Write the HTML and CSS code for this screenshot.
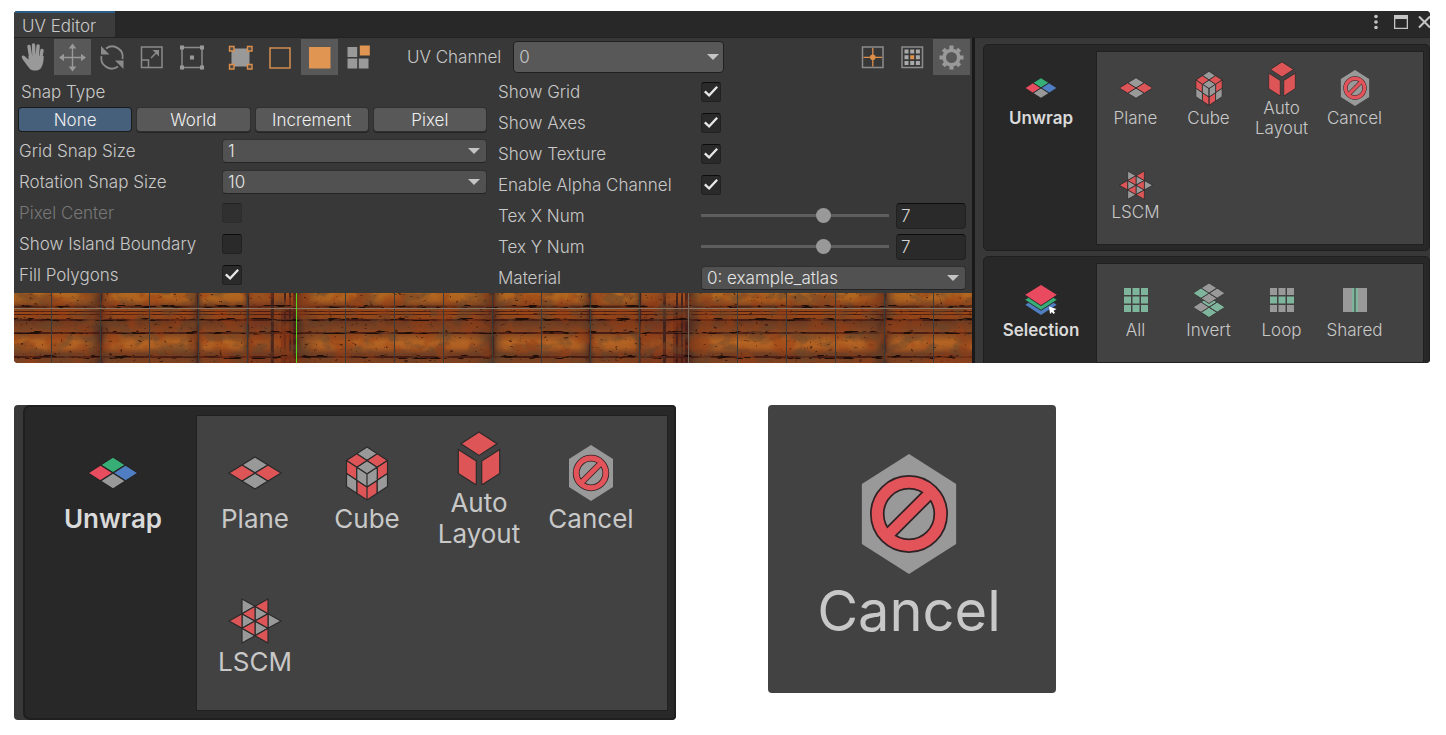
FILE: index.html
```html
<!DOCTYPE html>
<html lang="en">
<head>
<meta charset="utf-8">
<title>UV Editor</title>
<link rel="stylesheet" href="styles.css">
</head>
<body>
<svg class="sprite" aria-hidden="true">
  <symbol id="i-unwrap" viewBox="0 0 56 56">
    <g stroke="#262626" stroke-width="1.4">
      <path fill="#36ae75" d="M28 12l12.5 8L28 28l-12.5-8z"/>
      <path fill="#e84c5f" d="M15.500 20L28 28l-12.500 8L3 28z"/>
      <path fill="#4f7ec2" d="M40.500 20L53 28l-12.500 8L28 28z"/>
      <path fill="#999" d="M28 28l12.500 8L28 44l-12.500-8z"/>
    </g>
  </symbol>
  <symbol id="i-plane" viewBox="0 0 56 56">
    <g stroke="#2b2b2b" stroke-width="1.3">
      <path fill="#999" d="M28 12l13 8-13 8-13-8zM28 28l13 8-13 8-13-8z"/>
      <path fill="#de5557" d="M15 20l13 8-13 8-13-8zM41 20l13 8-13 8-13-8z"/>
    </g>
  </symbol>
  <symbol id="i-cube" viewBox="0 0 56 56">
    <g stroke="#2b2b2b" stroke-width="1.2" stroke-linejoin="round">
      <path fill="#999" d="M28 2l10.250 6.750L28 15.500 17.750 8.750zM28 15.500l10.250 6.750L28 29l-10.250-6.750z"/>
      <path fill="#de5557" d="M17.750 8.750L28 15.500l-10.250 6.750L7.500 15.500zM38.250 8.750l10.250 6.750-10.250 6.750L28 15.500z"/>
      <path fill="#de5557" d="M7.500 15.500l10.250 6.750v13L7.500 28.500zM17.750 35.250L28 42v13l-10.250-6.750zM48.500 15.500l-10.250 6.750v13l10.250-6.750zM38.250 35.250L28 42v13l10.250-6.750z"/>
      <path fill="#999" d="M17.750 22.250L28 29v13l-10.250-6.750zM7.500 28.500l10.250 6.750v13L7.500 41.500zM38.250 22.250L28 29v13l10.250-6.750zM48.500 28.500l-10.250 6.750v13l10.250-6.750z"/>
    </g>
  </symbol>
  <symbol id="i-auto" viewBox="0 0 56 56">
    <path fill="#de5557" stroke="#2b2b2b" stroke-width="1.200" d="M28 3l18 11.700L28 26.400 10 14.700zM7.300 20.500l18 11.500v24l-18-11.500zM48.700 20.500l-18 11.500v24l18-11.500z"/>
  </symbol>
  <symbol id="i-cancel" viewBox="0 0 56 56">
    <path fill="#999" d="M28 0l22 14v28L28 56 6 42V14z"/>
    <g fill="none" stroke="#2f2124">
      <circle cx="28" cy="28" r="14.800" stroke-width="6.800"/>
      <path stroke-width="6.400" d="M18 38l20-20"/>
    </g>
    <g fill="none" stroke="#e3535a">
      <circle cx="28" cy="28" r="14.800" stroke-width="5.200"/>
      <path stroke-width="4.800" d="M18 38l20-20"/>
    </g>
  </symbol>
  <symbol id="i-lscm" viewBox="0 0 56 56">
    <g stroke="#2b2b2b" stroke-width="1.200">
      <path fill="#999" d="M15 11v14.700l13-7.400zM15 25.700v14.600L28 33zM15 40.300V55l13-7.300zM28 18.300V33l13-7.300zM28 33v14.700l13-7.400zM41 25.700v14.600L54 33z"/>
      <path fill="#de5557" d="M28 18.300V33l-13-7.300zM28 33v14.700l-13-7.400zM15 25.700v14.600L2 33zM41 11v14.700l-13-7.400zM41 25.700v14.600L28 33zM41 40.300V55l-13-7.300z"/>
    </g>
  </symbol>
  <symbol id="i-selection" viewBox="0 0 36 36">
    <path fill="#4f7ec2" d="M18 13l15.700 9.800L18 33 2.300 22.800z"/>
    <path fill="#38ae76" stroke="#262626" stroke-width=".9" d="M18 8l16.500 9.800L18 28.300 1.500 17.800z"/>
    <path fill="#e94a60" stroke="#262626" stroke-width=".9" d="M18 2.500l16.500 10.300L18 23.600 1.500 12.800z"/>
    <path fill="#fff" d="M26 24.500l7.500 2.500-3 1.700 1.500 2-1.600 1.200-1.500-2-1.900 2z"/>
  </symbol>
  <symbol id="i-all" viewBox="0 0 36 36">
    <path fill="#7fb59c" d="M6 6h7v7H6zm8.500 0h7v7h-7zM23 6h7v7h-7zM6 14.500h7v7H6zm8.500 0h7v7h-7zm8.500 0h7v7h-7zM6 23h7v7H6zm8.500 0h7v7h-7zm8.500 0h7v7h-7z"/>
  </symbol>
  <symbol id="i-loop" viewBox="0 0 36 36">
    <path fill="#999" d="M6 6h7v7H6zm8.500 0h7v7h-7zM23 6h7v7h-7zM6 23h7v7H6zm8.500 0h7v7h-7zm8.500 0h7v7h-7z"/>
    <path fill="#7fb59c" d="M6 14.500h7v7H6zm8.500 0h7v7h-7zm8.500 0h7v7h-7z"/>
  </symbol>
  <symbol id="i-invert" viewBox="0 0 36 36">
    <g stroke="#3a3a3a" stroke-width=".9">
      <path fill="#7fb59c" d="M18 15l8 5.100-8 5.200-8-5.200zM26 20l8 5.200-8 5.100-8-5.100zM18 25.200l8 5.100-8 5.200-8-5.200z"/>
      <path fill="#999" d="M10 20l8 5.200-8 5.100-8-5.100z"/>
      <path fill="#999" d="M18 1l8 5.100-8 5.200-8-5.200zM26 6l8 5.200-8 5.100-8-5.100zM18 11.200l8 5.100-8 5.200-8-5.200z"/>
      <path fill="#7fb59c" d="M10 6l8 5.200-8 5.100-8-5.100z"/>
    </g>
  </symbol>
  <symbol id="i-shared" viewBox="0 0 36 36">
    <path fill="#999" d="M6 6h9v24H6zM21 6h9v24h-9z"/>
    <path fill="#7fb59c" d="M15 6h6v24h-6z"/>
    <path fill="#2c3a34" d="M17.500 6h1v24h-1z"/>
  </symbol>
</svg>

<main class="page">
  <section class="window">
    <header class="titlebar">
      <h1 class="tab">UV Editor</h1>
      <div class="win-actions">
        <button class="win-btn" aria-label="Menu"><svg viewBox="0 0 16 16" width="16" height="16"><g fill="#c4c4c4"><circle cx="8" cy="2.500" r="1.800"/><circle cx="8" cy="8" r="1.800"/><circle cx="8" cy="13.500" r="1.800"/></g></svg></button>
        <button class="win-btn" aria-label="Maximize"><svg viewBox="0 0 16 16" width="16" height="16"><path fill="#c4c4c4" fill-rule="evenodd" d="M2 1h14v14H2zM3.300 5v8.700h11.400V5z"/></svg></button>
        <button class="win-btn" aria-label="Close"><svg viewBox="0 0 16 16" width="16" height="16"><path stroke="#c4c4c4" stroke-width="2" d="M3 2.500l11 11M14 2.500l-11 11"/></svg></button>
      </div>
    </header>
    <div class="workspace">
      <div class="editor">
        <div class="toolbar">
          <div class="tool-group">
            <button class="icon-btn" aria-label="Pan"><svg viewBox="0 0 36 36"><g stroke="#999" stroke-linecap="round" fill="none" stroke-width="3.400"><path d="M16.800 19L15 7.500M20 18l-.5-12M23.200 18l.9-11M26.500 20l1.500-8.500"/></g><path fill="#999" d="M9.500 16.500c2 .5 3 3 5 4V17h15.200c0 5-.5 9-3 12.500-1.500 2.500-9 3-11.200 0-2.500-3.500-5.500-7-7.500-10.500-.8-1.700.2-2.900 1.500-2.500z"/></svg></button>
            <button class="icon-btn on" aria-label="Move"><svg viewBox="0 0 36 36"><path stroke="#999" stroke-width="1.400" d="M18.500 7v23M7 18.500h23"/><path fill="#999" d="M18.500 4.500l3.800 5h-7.600zM18.500 32.500l3.800-5h-7.600zM5 18.500l5-3.800v7.600zM32 18.500l-5-3.800v7.600z"/></svg></button>
            <button class="icon-btn" aria-label="Rotate"><svg viewBox="0 0 36 36"><path fill="none" stroke="#8a8a8a" stroke-width="1.800" d="M12 9.500A10.500 10.500 0 0 1 28.500 20M24 27.500A10.500 10.500 0 0 1 7.500 17"/><path fill="#8a8a8a" d="M7 7v8.500h8.500zM29.500 30v-8.500H21z"/></svg></button>
            <button class="icon-btn" aria-label="Scale"><svg viewBox="0 0 36 36"><path fill="none" stroke="#8a8a8a" stroke-width="1.500" d="M7.500 8h20.500v20.500H7.500zM7.500 21h7v7.500M17 19l6-6"/><path fill="#8a8a8a" d="M25 11v6.500L18.500 11z"/></svg></button>
            <button class="icon-btn" aria-label="Rect"><svg viewBox="0 0 36 36"><path fill="none" stroke="#8a8a8a" stroke-width="1.500" d="M8 8.500h20v20H8z"/><path fill="#999" d="M6 6.500h4v4H6zM26 6.500h4v4h-4zM6 26.500h4v4H6zM26 26.500h4v4h-4zM16 16.500h4v4h-4z"/></svg></button>
          </div>
          <div class="tool-group">
            <button class="icon-btn" aria-label="Vertex mode"><svg viewBox="0 0 36 36"><path fill="#999" d="M10.500 9.500h18v18h-18z"/><path fill="#4a4a4a" stroke="#dd8f4a" stroke-width="1.400" d="M8.500 7.500H13V12H8.500zM26.500 7.500H31V12h-4.500zM8.500 25.500H13V30H8.500zM26.500 25.500H31V30h-4.500z"/></svg></button>
            <button class="icon-btn" aria-label="Edge mode"><svg viewBox="0 0 36 36"><path fill="none" stroke="#cf8a4c" stroke-width="1.600" d="M9 9h20v20H9z"/></svg></button>
            <button class="icon-btn on" aria-label="Face mode"><svg viewBox="0 0 36 36"><path fill="#e09652" d="M8 8h21.500v21.500H8z"/></svg></button>
            <button class="icon-btn" aria-label="Island mode"><svg viewBox="0 0 36 36"><path fill="#999" d="M6.500 8h9.700v10H6.500zM6.500 19.500h9.700v10H6.500zM17.800 19.500h9.700v10h-9.700z"/><path fill="#e09652" d="M18.800 6.500h10v10h-10z"/></svg></button>
          </div>
          <label class="toolbar-label" for="uv-channel">UV Channel</label>
          <span class="select-wrap channel"><select id="uv-channel"><option>0</option></select></span>
          <div class="tool-group view-group">
            <button class="icon-btn" aria-label="Pivot"><svg viewBox="0 0 36 36"><path fill="none" stroke="#8c8c8c" stroke-width="1.500" d="M7.500 8h20.500v20.500H7.500z"/><path stroke="#dd8f4a" stroke-width="1.300" d="M17.800 9v18.500M8.500 18.300H27"/><circle cx="17.800" cy="18.300" r="2.800" fill="#dd8f4a"/></svg></button>
            <button class="icon-btn" aria-label="Grid"><svg viewBox="0 0 36 36"><path fill="none" stroke="#8c8c8c" stroke-width="1.500" d="M8 8h20.500v20.500H8z"/><path fill="#aaa" d="M10.500 10.500h4v4h-4zm5.700 0h4v4h-4zm5.700 0h4v4h-4zM10.500 16.200h4v4h-4zm11.400 0h4v4h-4zM10.500 21.900h4v4h-4zm5.700 0h4v4h-4zm5.700 0h4v4h-4z"/><path fill="#e0924c" d="M16.200 16.200h4v4h-4z"/></svg></button>
            <button class="icon-btn on" aria-label="Settings"><svg viewBox="0 0 36 36"><circle cx="18.500" cy="18.500" r="7.300" fill="none" stroke="#999" stroke-width="3.600"/><g stroke="#999" stroke-width="4.200"><path d="M18.500 6.500v4M18.500 26.500v4M6.500 18.500h4M26.500 18.500h4M10.300 10.300l2.500 2.500M24.200 24.200l2.500 2.500M10.300 26.700l2.500-2.500M24.200 12.800l2.500-2.500"/></g></svg></button>
          </div>
        </div>

        <div class="settings">
          <div class="col">
            <div class="row"><span class="snap-title" id="snap">Snap Type</span></div>
            <div class="segments" role="group" aria-labelledby="snap">
              <button class="seg active">None</button><button class="seg">World</button><button class="seg">Increment</button><button class="seg">Pixel</button>
            </div>
            <div class="row"><label for="grid-snap">Grid Snap Size</label><span class="select-wrap"><select id="grid-snap"><option>1</option></select></span></div>
            <div class="row"><label for="rot-snap">Rotation Snap Size</label><span class="select-wrap"><select id="rot-snap"><option>10</option></select></span></div>
            <div class="row disabled"><label for="pixel-center">Pixel Center</label><input type="checkbox" id="pixel-center" disabled></div>
            <div class="row"><label for="island">Show Island Boundary</label><input type="checkbox" id="island"></div>
            <div class="row"><label for="fill">Fill Polygons</label><input type="checkbox" id="fill" checked></div>
          </div>
          <div class="col">
            <div class="row"><label for="grid">Show Grid</label><input type="checkbox" id="grid" checked></div>
            <div class="row"><label for="axes">Show Axes</label><input type="checkbox" id="axes" checked></div>
            <div class="row"><label for="texture">Show Texture</label><input type="checkbox" id="texture" checked></div>
            <div class="row"><label for="alpha">Enable Alpha Channel</label><input type="checkbox" id="alpha" checked></div>
            <div class="row"><label for="tex-x">Tex X Num</label><div class="slider"><input type="range" id="tex-x" min="1" max="10" value="7"><input type="text" class="num" value="7" aria-label="Tex X Num value"></div></div>
            <div class="row"><label for="tex-y">Tex Y Num</label><div class="slider"><input type="range" id="tex-y" min="1" max="10" value="7"><input type="text" class="num" value="7" aria-label="Tex Y Num value"></div></div>
            <div class="row"><label for="material">Material</label><span class="select-wrap"><select id="material"><option>0: example_atlas</option></select></span></div>
          </div>
        </div>

        <svg class="canvas" viewBox="0 0 958 70" preserveAspectRatio="xMinYMin slice" role="img" aria-label="Texture preview">
          <defs>
            <linearGradient id="bands" x1="0" y1="0" x2="0" y2="1">
              <stop offset="0" stop-color="#b3681f"/><stop offset=".1" stop-color="#ab6020"/><stop offset=".17" stop-color="#854620"/>
              <stop offset=".2" stop-color="#40180e"/><stop offset=".22" stop-color="#8a421a"/><stop offset=".26" stop-color="#9c4a19"/>
              <stop offset=".36" stop-color="#904619"/><stop offset=".4" stop-color="#683820"/><stop offset=".54" stop-color="#844522"/>
              <stop offset=".6" stop-color="#8c4c20"/><stop offset=".7" stop-color="#b46423"/><stop offset=".78" stop-color="#ac5d22"/>
              <stop offset=".87" stop-color="#703d23"/><stop offset=".92" stop-color="#743f21"/><stop offset="1" stop-color="#7f421f"/>
            </linearGradient>
            <linearGradient id="edge">
              <stop offset="0" stop-color="#47291f" stop-opacity=".95"/><stop offset=".05" stop-color="#5d3825" stop-opacity=".5"/><stop offset=".13" stop-color="#7a4020" stop-opacity="0"/>
              <stop offset=".87" stop-color="#7a4020" stop-opacity="0"/><stop offset=".95" stop-color="#5d3825" stop-opacity=".5"/><stop offset="1" stop-color="#47291f" stop-opacity=".95"/>
            </linearGradient>
            <pattern id="plates" patternUnits="userSpaceOnUse" x="-110" y="0" width="392" height="70">
              <rect width="392" height="70" fill="url(#bands)"/>
              <rect x="344" width="48" height="70" fill="#7a2f1c" opacity=".4"/>
              <g fill="url(#edge)">
                <rect width="197" height="70"/><rect x="197" width="97" height="70"/><rect x="294" width="50" height="70"/><rect x="344" width="24" height="70"/>
              </g>
              <g fill="#4a1d14">
                <rect y="18" width="392" height="1"/><rect y="21" width="392" height="1"/><rect y="26" width="392" height="2"/><rect y="39" width="392" height="2"/><rect y="63" width="392" height="2"/>
              </g>
              <g fill="#43231d">
                <rect x="196" width="2" height="70"/><rect x="293" width="2" height="70"/><rect x="343" width="2" height="70"/>
                <rect x="367" width="3" height="70"/><rect x="380" width="2" height="70"/><rect x="385" width="2" height="70"/><rect x="389" width="3" height="70"/>
              </g>
              <rect x="377" y="14" width="15" height="56" fill="#4f1b16" opacity=".5"/>
            </pattern>
            <filter id="stain" x="0" y="0" width="100%" height="100%" color-interpolation-filters="sRGB">
              <feTurbulence type="fractalNoise" baseFrequency=".05 .08" numOctaves="4" seed="8"/>
              <feColorMatrix values="0 0 0 0 .4  0 0 0 0 .27  0 0 0 0 .17  4.500 0 0 0 -2.150"/>
            </filter>
            <filter id="rust" x="0" y="0" width="100%" height="100%" color-interpolation-filters="sRGB">
              <feTurbulence type="fractalNoise" baseFrequency=".05 .05" numOctaves="3" seed="21"/>
              <feColorMatrix values="0 0 0 0 .6  0 0 0 0 .24  0 0 0 0 .08  0 4.500 0 0 -2.100"/>
            </filter>
            <filter id="specks" x="0" y="0" width="100%" height="100%" color-interpolation-filters="sRGB">
              <feTurbulence type="fractalNoise" baseFrequency=".2 .3" numOctaves="3" seed="4"/>
              <feColorMatrix values="0 0 0 0 .2  0 0 0 0 .08  0 0 0 0 .04  8 0 0 0 -5.600"/>
            </filter>
            <filter id="chips" x="0" y="0" width="100%" height="100%" color-interpolation-filters="sRGB">
              <feTurbulence type="fractalNoise" baseFrequency=".07 .4" numOctaves="3" seed="12"/>
              <feColorMatrix values="0 0 0 0 .12  0 0 0 0 .05  0 0 0 0 .03  10 0 0 0 -5.700"/>
            </filter>
            <pattern id="gridlines" patternUnits="userSpaceOnUse" x="37" width="49" height="70"><rect width="1" height="70" fill="#3b3b3a"/></pattern>
          </defs>
          <rect width="1600" height="70" fill="url(#plates)"/>
          <rect width="1600" height="70" filter="url(#stain)" opacity=".55"/>
          <rect width="1600" height="70" filter="url(#rust)" opacity=".5"/>
          <rect width="1600" height="70" filter="url(#specks)" opacity=".7"/>
          <rect y="12" width="1600" height="3" filter="url(#chips)"/>
          <rect y="25" width="1600" height="3" filter="url(#chips)"/>
          <rect y="38" width="1600" height="3" filter="url(#chips)"/>
          <rect y="62" width="1600" height="4" filter="url(#chips)"/>
          <rect width="1600" height="70" fill="url(#gridlines)"/>
          <rect y="15" width="1600" height="1" fill="#8a7560"/>
          <rect x="282" width="1" height="70" fill="#55d51c"/>
          <rect x="674" width="1" height="70" fill="#77685c"/>
        </svg>
      </div>

      <aside class="sidebar">
        <section class="panel">
          <div class="panel-head"><div class="tile head"><svg><use href="#i-unwrap"/></svg><h2>Unwrap</h2></div></div>
          <div class="panel-body">
            <button class="tile"><svg><use href="#i-plane"/></svg><span>Plane</span></button>
            <button class="tile"><svg><use href="#i-cube"/></svg><span>Cube</span></button>
            <button class="tile"><svg><use href="#i-auto"/></svg><span>Auto Layout</span></button>
            <button class="tile"><svg><use href="#i-cancel"/></svg><span>Cancel</span></button>
            <button class="tile"><svg><use href="#i-lscm"/></svg><span>LSCM</span></button>
          </div>
        </section>
        <section class="panel">
          <div class="panel-head"><div class="tile head"><svg><use href="#i-selection"/></svg><h2>Selection</h2></div></div>
          <div class="panel-body">
            <button class="tile"><svg><use href="#i-all"/></svg><span>All</span></button>
            <button class="tile"><svg><use href="#i-invert"/></svg><span>Invert</span></button>
            <button class="tile"><svg><use href="#i-loop"/></svg><span>Loop</span></button>
            <button class="tile"><svg><use href="#i-shared"/></svg><span>Shared</span></button>
          </div>
        </section>
      </aside>
    </div>
  </section>

  <div class="details">
    <div class="detail-panel">
      <section class="panel large">
        <div class="panel-head"><div class="tile head"><svg><use href="#i-unwrap"/></svg><h2>Unwrap</h2></div></div>
        <div class="panel-body">
          <button class="tile"><svg><use href="#i-plane"/></svg><span>Plane</span></button>
          <button class="tile"><svg><use href="#i-cube"/></svg><span>Cube</span></button>
          <button class="tile"><svg><use href="#i-auto"/></svg><span>Auto Layout</span></button>
          <button class="tile"><svg><use href="#i-cancel"/></svg><span>Cancel</span></button>
          <button class="tile"><svg><use href="#i-lscm"/></svg><span>LSCM</span></button>
        </div>
      </section>
    </div>
    <button class="tile detail-tile"><svg><use href="#i-cancel"/></svg><span>Cancel</span></button>
  </div>
</main>
</body>
</html>
```
FILE: styles.css
```css
* { box-sizing: border-box; }

body {
  margin: 0;
  background: #fff;
  color: #c8c8c8;
  font-family: Inter, "Liberation Sans", sans-serif;
  font-size: 17px;
  font-weight: 300;
  line-height: 20px;
}

button, input, select { font: inherit; color: inherit; margin: 0; }
button { border: 0; padding: 0; background: none; }
h1, h2 { margin: 0; font-size: inherit; }

.sprite { display: none; }

.page { padding: 11px 16px 15px 14px; }

.window {
  background: #383838;
  border-radius: 4px;
  overflow: hidden;
}

.titlebar {
  display: flex;
  justify-content: space-between;
  height: 27px;
  background: #282828;
  border-bottom: 1px solid #232323;
}
.tab {
  padding: 3px 19px 0 8px;
  border-top: 2px solid #2c5d87;
  background: #3c3c3c;
  font-weight: 300;
}
.win-actions { display: flex; align-items: center; gap: 8px; margin-right: -2px; padding-bottom: 4px; }
.win-btn { display: flex; }

.workspace { display: flex; height: 325px; }
.editor {
  flex: 1;
  min-width: 0;
  display: flex;
  flex-direction: column;
  border-right: 3px solid #191919;
}

.toolbar { display: flex; align-items: center; height: 38px; padding-right: 2px; }
.tool-group { display: flex; gap: 3px; margin-right: 10px; }
.icon-btn { width: 37px; height: 36px; }
.icon-btn svg { display: block; width: 36px; height: 36px; }
.icon-btn.on { background: #585858; }
.toolbar-label { margin-left: 19px; margin-right: 12px; }
.view-group { gap: 2px; margin-left: auto; margin-right: 0; }

.settings { display: flex; gap: 11px; padding: 0 6px 0 5px; }
.col { flex: 1; }
.row { display: grid; grid-template-columns: 203px 1fr; align-items: center; height: 31px; }
.snap-title { padding-left: 2px; }
.segments { display: flex; gap: 6px; height: 28px; padding: 1px 1px 0 0; }
.seg {
  flex: 1;
  height: 23px;
  border-radius: 3px;
  background: #585858;
  color: #eee;
  box-shadow: 0 0 0 1px #303030, 0 1px 0 1px #242424;
}
.seg.active { background: #46607c; box-shadow: 0 0 0 1px #1b1b1b; }
.disabled { color: #777; }

.select-wrap { position: relative; display: block; }
.select-wrap::after {
  content: "";
  position: absolute;
  right: 7px;
  top: 50%;
  margin-top: -3px;
  border: 6px solid transparent;
  border-top-color: #c4c4c4;
  border-bottom: 0;
  pointer-events: none;
}
select {
  appearance: none;
  display: block;
  width: 100%;
  height: 24px;
  padding: 0 24px 0 5px;
  border: 1px solid #303030;
  border-bottom-color: #242424;
  border-radius: 4px;
  background: #515151;
  color: #e4e4e4;
}
.channel { width: 211px; }
.channel::after { right: 5px; }
.channel select { height: 32px; background: #585858; border-color: #202020; color: #c8c8c8; }

input[type="checkbox"] {
  appearance: none;
  display: grid;
  place-items: center;
  width: 20px;
  height: 20px;
  border: 1px solid #212121;
  border-top-color: #0d0d0d;
  border-radius: 3px;
  background: #2a2a2a;
}
input[type="checkbox"]:checked::before {
  content: "";
  width: 14px;
  height: 12px;
  background: #e8e8e8;
  clip-path: polygon(0 56%, 12% 42%, 36% 68%, 88% 4%, 100% 16%, 37% 96%);
}
input[type="checkbox"]:disabled { opacity: .5; }

.slider { display: grid; grid-template-columns: 1fr 70px; gap: 7px; align-items: center; }
input[type="range"] { appearance: none; width: 100%; height: 15px; background: none; }
input[type="range"]::-webkit-slider-runnable-track { height: 3px; background: #5e5e5e; }
input[type="range"]::-webkit-slider-thumb {
  appearance: none;
  width: 15px;
  height: 15px;
  margin-top: -6px;
  border-radius: 50%;
  background: #999;
}
.num {
  width: 100%;
  height: 26px;
  padding: 0 4px;
  border: 1px solid #212121;
  border-top-color: #0d0d0d;
  border-radius: 4px;
  background: #2a2a2a;
  color: #d2d2d2;
}
.canvas { display: block; width: 100%; flex: 1; min-height: 0; }

.sidebar {
  width: 455px;
  padding: 6px 0 0 8px;
  display: flex;
  flex-direction: column;
  gap: 5px;
}

.panel {
  display: flex;
  border: 1px solid #1f1f1f;
  border-radius: 5px;
  background: #282828;
  padding: 7px 6px 6px 0;
  --icon: 36px;
  --cell: 73px;
  --row: 94px;
  --head: 113px;
  --label: 17px;
  --line: 20px;
}
.panel-head { width: var(--head); padding-left: 1px; }
.panel-body {
  flex: 1;
  display: grid;
  grid-template-columns: repeat(auto-fill, var(--cell));
  align-content: start;
  padding: 0 1px 4px 2px;
  background: #424242;
  box-shadow: 0 0 0 1px #202020;
}
.tile {
  display: flex;
  flex-direction: column;
  align-items: center;
  justify-content: center;
  gap: 2px;
  height: var(--row);
  font-size: var(--label);
  line-height: var(--line);
  text-align: center;
}
.tile svg { width: var(--icon); height: var(--icon); flex: none; }
.head h2 { font-weight: 600; color: #dadada; }

.details {
  display: grid;
  grid-template-columns: minmax(0, 662px) 288px;
  align-items: start;
  gap: 92px;
  margin-top: 42px;
}
.detail-panel { padding-left: 9px; border-radius: 4px; background: #383838; overflow: hidden; }
.panel.large {
  border-width: 2px;
  border-radius: 7px 4px 4px 7px;
  padding: 9px 7px 8px 0;
  --icon: 56px;
  --cell: 112px;
  --row: 143px;
  --head: 172px;
  --label: 26px;
  --line: 31px;
}
.large .panel-head { padding-left: 4px; }
.large .panel-body { padding: 0 1px 8px 2px; }
.large .tile { padding-top: 3px; }
.large .tile, .detail-tile { font-weight: 400; }
.detail-tile {
  height: 288px;
  border-radius: 4px;
  background: #424242;
  gap: 4px;
  padding: 0 6px 0 0;
  --icon: 120px;
  --label: 56px;
  --line: 66px;
}
```
